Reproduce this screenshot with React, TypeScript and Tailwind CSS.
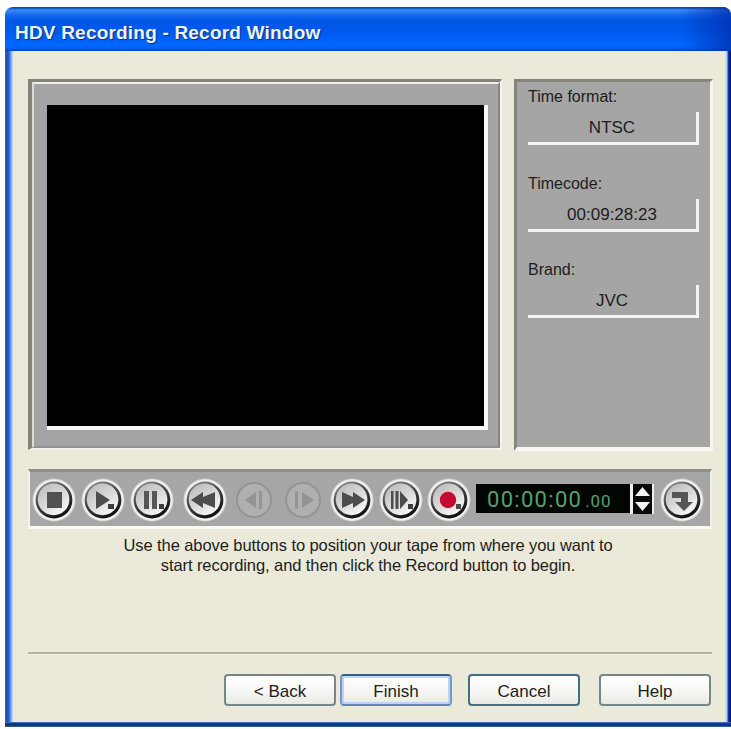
import React, { useState } from "react";

type ControlProps = {
  label: string;
  disabled?: boolean;
  className?: string;
  children: React.ReactNode;
};

const ControlButton: React.FC<ControlProps> = ({
  label,
  disabled,
  className = "",
  children,
}) => (
  <button
    aria-label={label}
    disabled={disabled}
    className={`w-11 h-11 shrink-0 ${className}`}
  >
    <svg width="44" height="44" viewBox="0 0 44 44">
      {disabled ? (
        <circle cx="22" cy="22" r="17" fill="#b0b0b0" stroke="#949494" strokeWidth="2" />
      ) : (
        <>
          <circle cx="22" cy="22" r="21.5" fill="#d2d2d0" />
          <circle cx="22" cy="22" r="20.5" fill="#f1f1ef" />
          <circle cx="22" cy="22" r="18.4" fill="url(#rim)" />
          <circle cx="21.6" cy="21.4" r="15.8" fill="url(#face)" />
        </>
      )}
      {children}
    </svg>
  </button>
);

const InfoField: React.FC<{ label: string; value: string }> = ({
  label,
  value,
}) => (
  <div className="h-[86.5px]">
    <div className="h-[30px] leading-[30px] text-[16px]">{label}</div>
    <div className="w-[171px] h-[33px] border-r-[3px] border-b-[3px] border-[#f4f4f4] leading-[32px] text-[17px] text-center">
      {value}
    </div>
  </div>
);

const DialogButton: React.FC<{ text: string; className: string }> = ({
  text,
  className,
}) => (
  <button
    className={`h-8 border-2 rounded-[4px] bg-linear-to-b from-white via-[#f7f8f5] to-[#e9e9e4] text-[17px] leading-[31px] ${className}`}
  >
    {text}
  </button>
);

const App: React.FC = () => {
  const [frames, setFrames] = useState<number>(0);

  return (
    <div className="w-[731px] h-[729px] bg-white overflow-hidden pl-[5px] pt-[7px] font-['Liberation_Sans',Arial,sans-serif] text-[#1d1d1b]">
      <svg width="0" height="0" className="absolute">
        <defs>
          <linearGradient id="rim" x1="0.2" y1="0" x2="0.7" y2="1">
            <stop offset="0" stopColor="#8f8f8f" />
            <stop offset="0.45" stopColor="#444" />
            <stop offset="1" stopColor="#0c0c0c" />
          </linearGradient>
          <linearGradient id="face" x1="0.1" y1="0" x2="0.8" y2="1">
            <stop offset="0" stopColor="#b9b9b9" />
            <stop offset="0.5" stopColor="#d8d8d8" />
            <stop offset="1" stopColor="#fafafa" />
          </linearGradient>
        </defs>
      </svg>

      <div className="w-[726px] h-[720px] flex flex-col rounded-t-[8px] overflow-hidden">
        {/* Title bar */}
        <div className="h-11 shrink-0 bg-[linear-gradient(to_bottom,#0a4fc0_0,#0a4fc0_1px,#3d8cf4_3px,#1268ee_8px,#0055e4_14px,#0059ee_24px,#0067ff_38px,#0062f8_41px,#0043c4_44px)]">
          <div className="h-full bg-linear-to-r from-transparent from-[93%] to-[#0030b0]/80 pl-[10px] pt-[1px]">
            <h1 className="text-[19px] leading-[49px] font-bold text-[#eef4fb] tracking-[0.2px] whitespace-nowrap [text-shadow:1px_1px_1px_#0a2f8a]">
              HDV Recording - Record Window
            </h1>
          </div>
        </div>

        <div className="flex h-[671px] shrink-0">
          <div className="w-2 shrink-0 bg-[linear-gradient(to_right,#3264c4_0,#1450b4_2px,#2a66d0_4px,#78a4f0_6px,#d4e2f4_8px)]" />

          <div className="flex-1 bg-[#ebe9d9] pt-7 pl-[15px]">
            <div className="flex gap-3">
              {/* Preview */}
              <div className="w-[474px] h-[371px] border-t-[3px] border-l-[4px] border-b-2 border-r-2 border-t-[#85837a] border-l-[#85837a] border-r-[#f4f4ea] border-b-[#f4f4ea]">
                <div className="w-full h-full bg-[#a5a4a4] border-t-2 border-l-2 border-r-2 border-b-2 border-t-[#eeeeea] border-l-[#dddbd2] border-r-[#858483] border-b-[#949391] pt-[21px] pl-[13px]">
                  <div className="w-[441px] h-[325px] bg-black border-r-[4px] border-b-[4px] border-[#f8f8f8]" />
                </div>
              </div>

              {/* Tape details */}
              <div className="w-[199px] h-[372px] bg-[#a5a5a5] border-t-[3px] border-l-[3px] border-r-[3px] border-b-[4px] border-t-[#85857c] border-l-[#85857c] border-r-[#f5f5ee] border-b-[#f9f9f2] pl-[11px]">
                <InfoField label="Time format:" value="NTSC" />
                <InfoField label="Timecode:" value="00:09:28:23" />
                <InfoField label="Brand:" value="JVC" />
              </div>
            </div>

            {/* Transport controls */}
            <div className="mt-[18px] w-[684px] h-[60px] bg-[#a7a6a6] border-t-[3px] border-l-2 border-r-2 border-b-[3px] border-t-[#908f8a] border-l-[#f2f2e8] border-r-[#f0f0e8] border-b-[#f9f9f3] flex items-center pl-[2px] pt-[2px]">
              <ControlButton label="Stop">
                <rect x="15" y="14" width="15" height="16" fill="#515151" />
              </ControlButton>
              <ControlButton label="Play" className="ml-[5px]">
                <path d="M15 13L29 22L15 31Z" fill="#4d4d4d" />
                <rect x="27" y="26" width="6" height="5" fill="#3d3d3d" />
              </ControlButton>
              <ControlButton label="Pause" className="ml-[5px]">
                <path d="M14 13H19V31H14ZM22 13H27V31H22Z" fill="#565656" />
                <rect x="29" y="26" width="5" height="5" fill="#3d3d3d" />
              </ControlButton>
              <ControlButton label="Rewind" className="ml-[9px]">
                <path d="M8 22L20 14V19L32 14V30L20 25V30Z" fill="#4d4d4d" />
              </ControlButton>
              <ControlButton label="Step back" disabled className="ml-[5px]">
                <path d="M13 22L24 14V30ZM27 13H30V31H27Z" fill="#949494" />
              </ControlButton>
              <ControlButton label="Step forward" disabled className="ml-[5px]">
                <path d="M14 13H17V31H14ZM21 14L33 22L21 30Z" fill="#949494" />
              </ControlButton>
              <ControlButton label="Fast forward" className="ml-[5px]">
                <path d="M12 14L23 19V14L35 22L23 30V25L12 30Z" fill="#4d4d4d" />
              </ControlButton>
              <ControlButton label="Slow play" className="ml-[5px]">
                <path d="M12 13H14.5V31H12ZM16.5 13H19.5V31H16.5ZM21 13L29 22L21 31Z" fill="#4d4d4d" />
                <rect x="29" y="26" width="5" height="5" fill="#3d3d3d" />
              </ControlButton>
              <ControlButton label="Record" className="ml-[4px]">
                <circle cx="21" cy="22" r="8.2" fill="#c50a32" />
                <rect x="29" y="26" width="5" height="5" fill="#4a4a4a" />
              </ControlButton>

              <div className="ml-[5px] -mt-[3px] w-[154px] h-[29px] bg-[#020603] flex items-baseline pl-[11px] font-['Roboto',sans-serif] text-[#55a06c] whitespace-nowrap">
                <span className="text-[22px] leading-[31px] tracking-[1.3px]">
                  00:00:00
                </span>
                <span className="ml-[3px] text-[17px] leading-[31px] tracking-[0.8px]">
                  .{String(frames).padStart(2, "0")}
                </span>
              </div>
              <div className="w-[24px] h-[30px] -mt-[3px] bg-[#090909] border-l-[3px] border-r-2 border-[#eeeeee] flex flex-col">
                <button
                  aria-label="Increase"
                  className="h-[15px] flex justify-center pt-[3px]"
                  onClick={() => setFrames((frames + 1) % 30)}
                >
                  <svg width="15" height="9" viewBox="0 0 15 9">
                    <path d="M7.5 0L15 9H0Z" fill="#f4f4f4" />
                  </svg>
                </button>
                <button
                  aria-label="Decrease"
                  className="h-[15px] flex justify-center pt-[3px]"
                  onClick={() => setFrames((frames + 29) % 30)}
                >
                  <svg width="15" height="9" viewBox="0 0 15 9">
                    <path d="M0 0H15L7.5 9Z" fill="#f4f4f4" />
                  </svg>
                </button>
              </div>
              <ControlButton label="Go to timecode" className="ml-[6px]">
                <path d="M12 14H28V24H33L24 33L15 24H21V20H12Z" fill="#555" />
              </ControlButton>
            </div>

            <p className="w-[680px] mt-[7px] text-center text-[16.5px] leading-[19.5px] tracking-[-0.08px] whitespace-nowrap">
              Use the above buttons to position your tape from where you want to
              <br />
              start recording, and then click the Record button to begin.
            </p>

            <div className="mt-[77px] w-[684px] h-[3px] border-t-2 border-[#b5b3a1] border-b border-b-[#f3f2e6]" />

            <div className="flex mt-[19px] pl-[196px]">
              <DialogButton text="< Back" className="w-[112px] border-[#76868b]" />
              <DialogButton
                text="Finish"
                className="w-[112px] ml-[4px] border-t-[#365f88] border-x-[#7598cb] border-b-[#6586bd] shadow-[inset_0_0_0_2px_#bcd4f5]"
              />
              <DialogButton text="Cancel" className="w-[112px] ml-[16px] border-[#466d80]" />
              <DialogButton text="Help" className="w-[112px] ml-[19px] border-[#76868b]" />
            </div>
          </div>

          <div className="w-[6px] shrink-0 bg-[linear-gradient(to_right,#d4e4f4_0,#9dc4f8_2px,#2b5bc0_3px,#001d80_4px,#001d80_6px)]" />
        </div>
        <div className="h-[5px] shrink-0 bg-[linear-gradient(to_bottom,#6b94d0_0,#123f90_1px,#0c3180_4px,#5f7fba_5px)]" />
      </div>
    </div>
  );
};

export default App;
